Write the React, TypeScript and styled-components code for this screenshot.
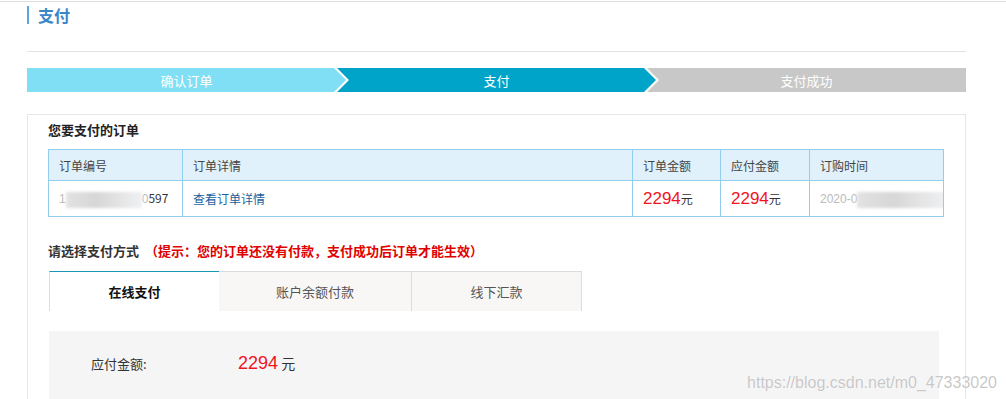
import styled, { createGlobalStyle } from 'styled-components';

const GlobalStyle = createGlobalStyle`
    body {
        margin: 0;
        background: #fff;
        font-family: "Liberation Sans", "Noto Sans CJK SC", sans-serif;
        color: #333;
    }
`;

const Page = styled.div`
    position: relative;
    width: 1006px;
    height: 399px;
    overflow: hidden;
    border-top: 1px solid #dcdcdc;
    margin-top: 1px;
    box-sizing: border-box;
`;

const Inner = styled.div`
    width: 939px;
    margin-left: 27px;
`;

const Title = styled.h2`
    margin: 4px 0 0;
    height: 18px;
    line-height: 18px;
    padding-left: 9px;
    border-left: 2px solid #5aa6e0;
    font-size: 16px;
    font-weight: bold;
    color: #3a86c6;
    font-family: "Noto Sans CJK SC", sans-serif;
`;

const Divider = styled.div`
    margin-top: 27px;
    border-top: 1px solid #e2e2e2;
`;

const Steps = styled.div`
    display: flex;
    margin-top: 16px;
    height: 24px;
`;

const Step = styled.div<{ $bg: string; $first?: boolean; $last?: boolean }>`
    flex: 1;
    display: flex;
    align-items: center;
    justify-content: center;
    background: ${(p) => p.$bg};
    color: #fff;
    font-size: 13px;
    font-family: "Noto Sans CJK SC", sans-serif;
    margin-left: ${(p) => (p.$first ? '0' : '-9px')};
    clip-path: polygon(
        0 0,
        ${(p) => (p.$last ? '100% 0, 100% 100%' : 'calc(100% - 12px) 0, 100% 50%, calc(100% - 12px) 100%')},
        0 100%,
        ${(p) => (p.$first ? '0 50%' : '12px 50%')}
    );
`;

const Panel = styled.div`
    margin-top: 22px;
    border: 1px solid #e6e6e6;
    border-bottom: none;
    height: 300px;
    padding: 5px 20px 0;
`;

const Heading = styled.h3`
    margin: 0;
    height: 20px;
    line-height: 20px;
    font-size: 13px;
    font-weight: bold;
    color: #222;
    font-family: "Noto Sans CJK SC", sans-serif;
`;

const Table = styled.table`
    margin-top: 9px;
    width: 895px;
    table-layout: fixed;
    border-collapse: collapse;
    font-size: 12px;
    font-family: "Noto Sans CJK SC", sans-serif;
`;

const Th = styled.th`
    height: 30px;
    padding: 0 0 0 10px;
    text-align: left;
    font-weight: normal;
    color: #444;
    background: #e1f1fb;
    border: 1px solid #95cdee;
`;

const Td = styled.td`
    height: 35px;
    padding: 0 0 0 10px;
    border: 1px solid #95cdee;
    color: #333;
    white-space: nowrap;
    overflow: hidden;
`;

const Link = styled.a`
    color: #1a5f9e;
    text-decoration: none;
`;

const Price = styled.span<{ $size: number }>`
    color: #f0141e;
    font-size: ${(p) => p.$size}px;
    font-family: "Liberation Sans", sans-serif;
`;

const Unit = styled.span<{ $size: number }>`
    font-size: ${(p) => p.$size}px;
    color: #333;
    font-family: "Noto Sans CJK SC", sans-serif;
`;

const Blur = styled.span<{ $w: number }>`
    display: inline-block;
    vertical-align: middle;
    width: ${(p) => p.$w}px;
    height: 16px;
    background: linear-gradient(90deg, #e2e2e2, #d6d6d6 40%, #e4e4e4 70%, #eef0f2);
    filter: blur(1.5px);
`;

const Faint = styled.span`
    color: #bbb;
    font-family: "Liberation Sans", sans-serif;
`;

const MethodTitle = styled.div`
    margin-top: 25px;
    font-size: 13px;
    font-weight: bold;
    color: #333;
    font-family: "Noto Sans CJK SC", sans-serif;
    line-height: 18px;
`;

const Hint = styled.span`
    color: #e00000;
    margin-left: 6px;
`;

const Tabs = styled.div`
    display: flex;
    margin-top: 11px;
    margin-left: 1px;
    height: 40px;
`;

const Tab = styled.div<{ $active?: boolean; $w: number }>`
    width: ${(p) => p.$w}px;
    box-sizing: border-box;
    display: flex;
    align-items: center;
    justify-content: center;
    font-size: 13px;
    font-family: "Noto Sans CJK SC", sans-serif;
    background: ${(p) => (p.$active ? '#fff' : '#f8f7f6')};
    color: ${(p) => (p.$active ? '#111' : '#555')};
    font-weight: ${(p) => (p.$active ? 'bold' : 'normal')};
    border-top: 1px solid ${(p) => (p.$active ? '#1796b5' : '#dcdcdc')};
    border-left: 1px solid #dcdcdc;
    border-right: ${(p) => (p.$active ? 'none' : '1px solid #dcdcdc')};
    & + & {
        border-left: none;
    }
`;

const PayBox = styled.div`
    margin-top: 20px;
    margin-left: 1px;
    width: 890px;
    height: 80px;
    background: #f5f5f5;
    display: flex;
    align-items: baseline;
    padding-top: 22px;
    box-sizing: border-box;
`;

const PayLabel = styled.span`
    width: 147px;
    padding-left: 42px;
    font-size: 13px;
    color: #333;
    font-family: "Noto Sans CJK SC", sans-serif;
`;

const Watermark = styled.div`
    position: absolute;
    right: 9px;
    bottom: 8px;
    font-size: 16px;
    color: rgba(190, 190, 190, 0.85);
    font-family: "Liberation Sans", sans-serif;
    text-shadow: 0 0 1px #fff;
`;

const columns = [134, 450, 88, 89, 134];

export default function App() {
    return (
        <>
            <GlobalStyle />
            <Page>
                <Inner>
                    <Title>支付</Title>
                    <Divider />
                    <Steps>
                        <Step $bg="#80dff5" $first>确认订单</Step>
                        <Step $bg="#00a4c9">支付</Step>
                        <Step $bg="#c8c8c8" $last>支付成功</Step>
                    </Steps>
                    <Panel>
                        <Heading>您要支付的订单</Heading>
                        <Table>
                            <colgroup>
                                {columns.map((w, i) => (
                                    <col key={i} style={{ width: w }} />
                                ))}
                            </colgroup>
                            <thead>
                                <tr>
                                    <Th>订单编号</Th>
                                    <Th>订单详情</Th>
                                    <Th>订单金额</Th>
                                    <Th>应付金额</Th>
                                    <Th>订购时间</Th>
                                </tr>
                            </thead>
                            <tbody>
                                <tr>
                                    <Td>
                                        <Faint>1</Faint>
                                        <Blur $w={76} />
                                        <Faint>0</Faint>597
                                    </Td>
                                    <Td>
                                        <Link href="#">查看订单详情</Link>
                                    </Td>
                                    <Td>
                                        <Price $size={17}>2294</Price>
                                        <Unit $size={12}>元</Unit>
                                    </Td>
                                    <Td>
                                        <Price $size={17}>2294</Price>
                                        <Unit $size={12}>元</Unit>
                                    </Td>
                                    <Td>
                                        <Faint>2020-0</Faint>
                                        <Blur $w={90} />
                                    </Td>
                                </tr>
                            </tbody>
                        </Table>
                        <MethodTitle>
                            请选择支付方式
                            <Hint>（提示：您的订单还没有付款，支付成功后订单才能生效）</Hint>
                        </MethodTitle>
                        <Tabs>
                            <Tab $active $w={170}>在线支付</Tab>
                            <Tab $w={193}>账户余额付款</Tab>
                            <Tab $w={170}>线下汇款</Tab>
                        </Tabs>
                        <PayBox>
                            <PayLabel>应付金额:</PayLabel>
                            <Price $size={18}>2294</Price>
                            <Unit $size={14}>&nbsp;元</Unit>
                        </PayBox>
                    </Panel>
                </Inner>
                <Watermark>https://blog.csdn.net/m0_47333020</Watermark>
            </Page>
        </>
    );
}
